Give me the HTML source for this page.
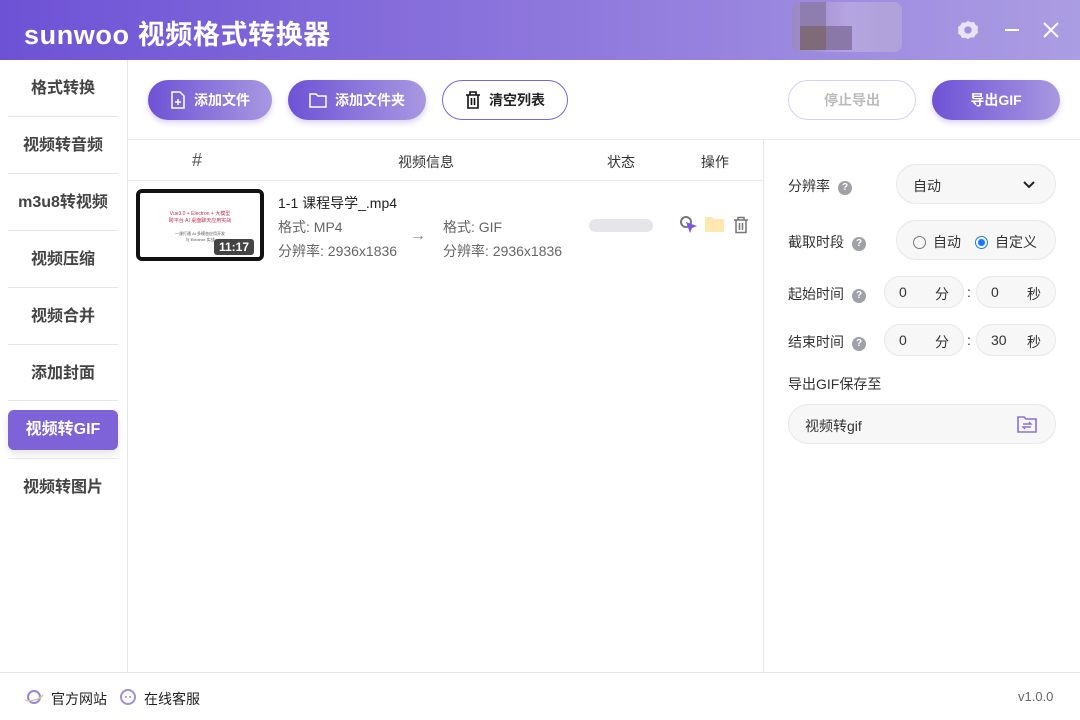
<!DOCTYPE html>
<html><head><meta charset="utf-8"><style>
*{box-sizing:border-box;margin:0;padding:0}
body{width:1080px;height:720px;overflow:hidden;background:#fff;font-family:"Liberation Sans","Noto Sans CJK SC",sans-serif;color:#333;position:relative}
.abs{position:absolute}
.hdr{left:0;top:0;width:1080px;height:60px;background:linear-gradient(90deg,#6e52d6,#8d76dc 50%,#ab9de3)}
.title{left:24px;top:13px;color:#fff;font-size:27px;font-weight:bold;letter-spacing:0.6px}
.side{left:0;top:60px;width:128px;height:612px;border-right:1px solid #e6e6e6}
.item{position:absolute;left:8px;width:110px;height:40px;line-height:40px;text-align:center;font-size:16px;font-weight:bold;color:#444}
.sep{position:absolute;left:8px;width:110px;height:1px;background:#e6e6e6}
.btn{position:absolute;top:80px;height:40px;border-radius:20px;color:#fff;font-size:14px;font-weight:bold;display:flex;align-items:center;justify-content:center;gap:8px;background:linear-gradient(90deg,#6e52d6,#a898e0);box-shadow:0 3px 6px rgba(110,82,214,.25)}
.th{top:152px;font-size:14px;color:#333}
.lbl{font-size:14px;color:#333;position:absolute;left:788px}
.q{display:inline-block;width:14px;height:14px;border-radius:50%;background:#a0a0a8;color:#fff;font-size:10px;text-align:center;line-height:14px;font-weight:bold;margin-left:8px;vertical-align:1px}
.pill{position:absolute;height:40px;border:1px solid #e8e8e8;background:#f7f7f7;border-radius:20px;font-size:14px;color:#333}
</style></head><body>
<div class="abs hdr"></div>
<div class="abs title">sunwoo 视频格式转换器</div>
<div class="abs" style="left:792px;top:2px;width:110px;height:50px;background:linear-gradient(90deg,#9a88c0,#b8a8e0 50%,#b4a4d8);opacity:.85;border-radius:8px"></div>
<div class="abs" style="left:800px;top:2px;width:26px;height:24px;background:#8e7eb0"></div>
<div class="abs" style="left:800px;top:26px;width:26px;height:24px;background:#7e6a78"></div>
<div class="abs" style="left:826px;top:26px;width:26px;height:24px;background:#8a78a8"></div>
<svg class="abs" style="left:957px;top:19px" width="22" height="22" viewBox="0 0 24 24"><path fill="#e8e4f4" d="M12 2l3 1.5 3.5-.2 1.7 3 2.8 2-.6 3.5.6 3.4-2.8 2-1.7 3-3.5-.2L12 22l-3-1.5-3.5.2-1.7-3-2.8-2 .6-3.4-.6-3.5 2.8-2 1.7-3 3.5.2z"/><circle cx="12" cy="12" r="4" fill="#a190e0"/></svg>
<div class="abs" style="left:1005px;top:29px;width:14px;height:2px;background:#fff"></div>
<svg class="abs" style="left:1043px;top:22px" width="16" height="16"><path d="M1 1L15 15M15 1L1 15" stroke="#fff" stroke-width="2"/></svg>

<div class="abs side">
<div class="item" style="top:9px">格式转换</div><div class="sep" style="top:56px"></div>
<div class="item" style="top:66px">视频转音频</div><div class="sep" style="top:113px"></div>
<div class="item" style="top:123px">m3u8转视频</div><div class="sep" style="top:170px"></div>
<div class="item" style="top:180px">视频压缩</div><div class="sep" style="top:227px"></div>
<div class="item" style="top:237px">视频合并</div><div class="sep" style="top:284px"></div>
<div class="item" style="top:294px">添加封面</div><div class="sep" style="top:340px"></div>
<div class="item" style="top:350px;background:#7d62d8;color:#fff;border-radius:6px;box-shadow:0 4px 8px rgba(0,0,0,.1)">视频转GIF</div><div class="sep" style="top:398px"></div>
<div class="item" style="top:408px">视频转图片</div>
</div>

<div class="btn" style="left:148px;width:124px"><svg width="16" height="18" viewBox="0 0 16 18"><path d="M2 1h8l4 4v12H2z" fill="none" stroke="#fff" stroke-width="1.5"/><path d="M8 8v6M5 11h6" stroke="#fff" stroke-width="1.5"/></svg>添加文件</div>
<div class="btn" style="left:288px;width:138px"><svg width="18" height="16" viewBox="0 0 18 16"><path d="M1 2h6l2 2h8v11H1z" fill="none" stroke="#fff" stroke-width="1.5"/></svg>添加文件夹</div>
<div class="btn" style="left:442px;width:126px;background:#fff;color:#222;border:1px solid #7d62d8;box-shadow:none"><svg width="16" height="18" viewBox="0 0 16 18"><path d="M1 4h14M5 4V1h6v3M3 4v13h10V4M6.5 7v7M9.5 7v7" fill="none" stroke="#111" stroke-width="1.6"/></svg>清空列表</div>
<div class="btn" style="left:788px;width:128px;background:#fff;color:#bbb;border:1px solid #d8d0f4;box-shadow:none">停止导出</div>
<div class="btn" style="left:932px;width:128px">导出GIF</div>

<div class="abs" style="left:128px;top:139px;width:952px;height:1px;background:#e8e8e8"></div>
<div class="abs" style="left:128px;top:180px;width:635px;height:1px;background:#e8e8e8"></div>
<div class="abs" style="left:763px;top:140px;width:1px;height:532px;background:#e8e8e8"></div>
<div class="abs th" style="left:192px;font-size:18px;top:150px;color:#555">#</div>
<div class="abs th" style="left:398px">视频信息</div>
<div class="abs th" style="left:607px">状态</div>
<div class="abs th" style="left:701px">操作</div>

<div class="abs" style="left:136px;top:189px;width:128px;height:72px;background:#fff;border:4px solid #111;border-radius:6px;overflow:hidden">
<div style="position:absolute;left:0;right:0;top:18px;text-align:center;font-size:5px;color:#c03050;line-height:7px">Vue3.0 + Electron + 大模型<br>跨平台 AI 桌面聊天应用实战</div>
<div style="position:absolute;left:0;right:0;top:38px;text-align:center;font-size:4px;color:#555;line-height:6px">一课打通 AI 多模态应用开发<br>与 Electron 实战</div>
<div style="position:absolute;right:6px;bottom:2px;background:#444;color:#fff;font-size:12px;font-weight:bold;padding:1px 5px;border-radius:3px">11:17</div>
</div>
<div class="abs" style="left:278px;top:193px;font-size:14px;color:#222">1-1 课程导学_.mp4</div>
<div class="abs" style="left:278px;top:217px;font-size:14px;color:#666">格式: MP4</div>
<div class="abs" style="left:278px;top:241px;font-size:14px;color:#666">分辨率: 2936x1836</div>
<div class="abs" style="left:410px;top:227px;font-size:16px;color:#888">→</div>
<div class="abs" style="left:443px;top:217px;font-size:14px;color:#666">格式: GIF</div>
<div class="abs" style="left:443px;top:241px;font-size:14px;color:#666">分辨率: 2936x1836</div>
<div class="abs" style="left:589px;top:219px;width:64px;height:13px;border-radius:7px;background:#e6e6ea"></div>
<svg class="abs" style="left:680px;top:216px" width="18" height="18" viewBox="0 0 18 18"><circle cx="6" cy="6" r="5" fill="none" stroke="#777" stroke-width="2"/><path d="M6 6l11 4-5 2-2 5z" fill="#7d55e8"/></svg>
<svg class="abs" style="left:705px;top:216px" width="19" height="16" viewBox="0 0 19 16"><path d="M0 1h7l2 2h10v13H0z" fill="#fde8b0"/></svg>
<svg class="abs" style="left:733px;top:216px" width="16" height="18" viewBox="0 0 16 18"><path d="M1 4h14M5 4V1.5h6V4M3 4v12.5h10V4M6.5 7v7M9.5 7v7" fill="none" stroke="#777" stroke-width="1.5"/></svg>

<div class="lbl" style="top:176px">分辨率<span class="q">?</span></div>
<div class="pill" style="left:896px;top:164px;width:160px;padding:11px 16px">自动<svg style="position:absolute;right:20px;top:16px" width="12" height="8"><path d="M1 1l5 5 5-5" fill="none" stroke="#222" stroke-width="2"/></svg></div>
<div class="lbl" style="top:232px">截取时段<span class="q">?</span></div>
<div class="pill" style="left:896px;top:220px;width:160px;padding:11px 0 0 16px"><span style="display:inline-block;width:13px;height:13px;border:1px solid #777;border-radius:50%;vertical-align:-2px;margin-right:7px"></span>自动<span style="display:inline-block;width:13px;height:13px;border:1px solid #1677ff;border-radius:50%;vertical-align:-2px;margin:0 7px 0 14px;background:radial-gradient(#1677ff 3px,#fff 4px)"></span>自定义</div>
<div class="lbl" style="top:284px">起始时间<span class="q">?</span></div>
<div class="pill" style="left:884px;top:276px;width:80px;height:32px;padding:7px 14px">0<span style="float:right">分</span></div>
<div class="abs" style="left:967px;top:284px;font-size:14px">:</div>
<div class="pill" style="left:976px;top:276px;width:80px;height:32px;padding:7px 14px">0<span style="float:right">秒</span></div>
<div class="lbl" style="top:332px">结束时间<span class="q">?</span></div>
<div class="pill" style="left:884px;top:324px;width:80px;height:32px;padding:7px 14px">0<span style="float:right">分</span></div>
<div class="abs" style="left:967px;top:332px;font-size:14px">:</div>
<div class="pill" style="left:976px;top:324px;width:80px;height:32px;padding:7px 14px">30<span style="float:right">秒</span></div>
<div class="lbl" style="top:374px">导出GIF保存至</div>
<div class="pill" style="left:788px;top:404px;width:268px;padding:11px 16px">视频转gif<svg style="position:absolute;right:18px;top:11px" width="20" height="17" viewBox="0 0 20 17"><path d="M1 1h6l2 2h10v13H1z" fill="none" stroke="#8a70e0" stroke-width="1.6"/><path d="M6 8h8l-2-2M14 11H6l2 2" fill="none" stroke="#8a70e0" stroke-width="1.4"/></svg></div>

<div class="abs" style="left:0;top:672px;width:1080px;height:1px;background:#e6e6e6"></div>
<svg class="abs" style="left:24px;top:688px" width="20" height="18" viewBox="0 0 20 18"><circle cx="10" cy="9" r="6" fill="none" stroke="#9a84e0" stroke-width="2"/><path d="M1 12c4 2 14 0 18-5" fill="none" stroke="#d8c8a0" stroke-width="1.5"/></svg>
<div class="abs" style="left:51px;top:689px;font-size:14px;color:#222">官方网站</div>
<svg class="abs" style="left:119px;top:688px" width="18" height="18" viewBox="0 0 18 18"><circle cx="9" cy="9" r="7" fill="none" stroke="#a090d8" stroke-width="2"/><circle cx="7" cy="9" r="1" fill="#a090d8"/><circle cx="11" cy="9" r="1" fill="#a090d8"/></svg>
<div class="abs" style="left:144px;top:689px;font-size:14px;color:#222">在线客服</div>
<div class="abs" style="left:1018px;top:689px;font-size:13px;color:#666">v1.0.0</div>
</body></html>
